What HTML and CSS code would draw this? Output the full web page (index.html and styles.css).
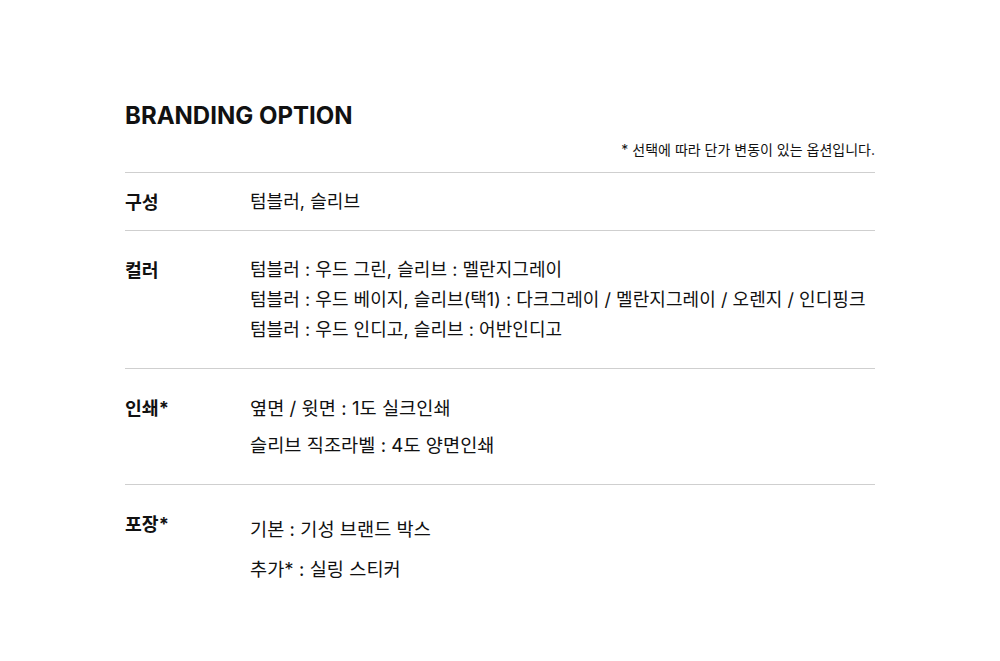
FILE: index.html
```html
<!DOCTYPE html>
<html lang="ko">
<head>
<meta charset="utf-8">
<link rel="stylesheet" href="styles.css">
</head>
<body>
<main class="wrap">
  <h1 class="title">BRANDING OPTION</h1>
  <p class="note">* 선택에 따라 단가 변동이 있는 옵션입니다.</p>
  <section class="table">
    <div class="row row-1">
      <div class="label">구성</div>
      <div class="values"><div class="v">텀블러, 슬리브</div></div>
    </div>
    <div class="row row-2">
      <div class="label">컬러</div>
      <div class="values">
        <div class="v">텀블러 : 우드 그린, 슬리브 : 멜란지그레이</div>
        <div class="v">텀블러 : 우드 베이지, 슬리브(택1) : 다크그레이 / 멜란지그레이 / 오렌지 / 인디핑크</div>
        <div class="v">텀블러 : 우드 인디고, 슬리브 : 어반인디고</div>
      </div>
    </div>
    <div class="row row-3">
      <div class="label">인쇄*</div>
      <div class="values gap7 large">
        <div class="v">옆면 / 윗면 : 1도 실크인쇄</div>
        <div class="v">슬리브 직조라벨 : 4도 양면인쇄</div>
      </div>
    </div>
    <div class="row row-4">
      <div class="label">포장*</div>
      <div class="values gap10 large">
        <div class="v">기본 : 기성 브랜드 박스</div>
        <div class="v">추가* : 실링 스티커</div>
      </div>
    </div>
  </section>
</main>
</body>
</html>
```

FILE: styles.css
```css
* { box-sizing: border-box; }
html, body { margin: 0; padding: 0; background: #fff; }
body {
  font-family: "Inter", "Noto Sans CJK KR", sans-serif;
  color: #111;
}
.wrap {
  width: 750px;
  margin: 0 auto;
  padding-top: 100px;
}
.title {
  margin: 0;
  font-size: 24px;
  line-height: 32px;
  font-weight: 700;
}
.note {
  margin: 8px 0 0;
  text-align: right;
  font-size: 14px;
  line-height: 20px;
}
.table {
  margin-top: 12px;
}
.row {
  display: flex;
  border-top: 1px solid #cfcfcf;
}
.label {
  width: 125px;
  flex: none;
  font-size: 18.3px;
  font-weight: 700;
  line-height: 30px;
}
.values {
  display: flex;
  flex-direction: column;
}
.v {
  font-size: 18px;
  line-height: 30px;
  letter-spacing: 0.05px;
}
.large .v {
  font-size: 18.6px;
}
.gap7 { gap: 7px; }
.gap10 { gap: 10px; }
.row-1 { padding: 14px 0 13px; }
.row-2 { padding: 24px 0 23px; }
.row-3 { padding: 24px 0 24px; }
.row-4 { padding: 24px 0 24px; }
.row-4 .values { margin-top: 5px; }
```
